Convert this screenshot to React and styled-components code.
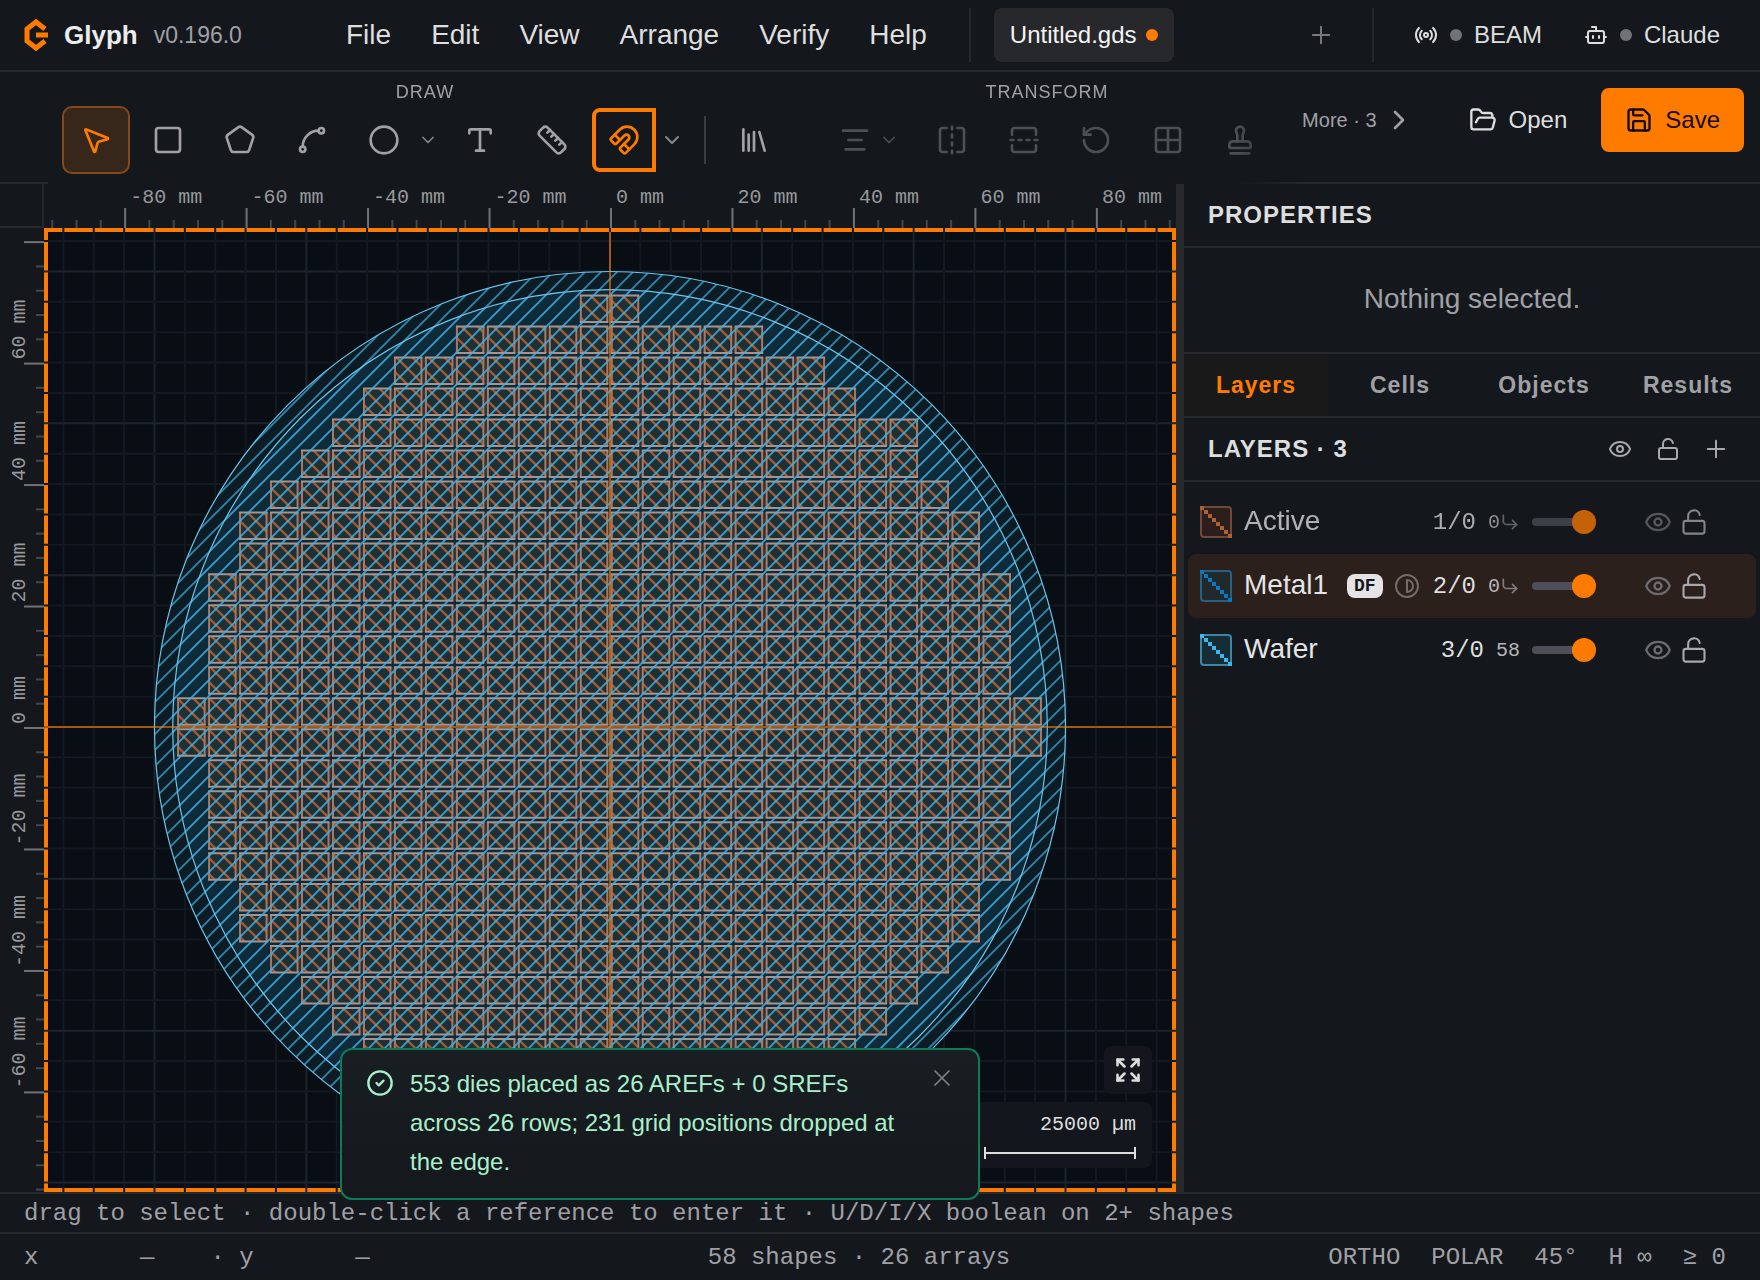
import React, { useState } from 'react'
import styled, { createGlobalStyle } from 'styled-components'
import {
   Bot, ChevronDown, ChevronRight, Circle, CircleCheck, CornerDownRight, Expand, Eye,
   FlipHorizontal, FlipVertical, FolderOpen, Grid2x2, Library, LockOpen, Magnet,
   MousePointer2, Pentagon, Plus, Radio, RotateCcw, Ruler, Save, Spline, Square, Stamp,
   AlignCenter, Type, X,
} from 'lucide-react'

const ORANGE = '#ff7b00'
const PANEL = '#14181c'
const LINE = '#25282c'
const MUTED = '#a0a0a6'
const BRIGHT = '#dededf'
const MONO = "'Liberation Mono', monospace"

const MENUS = ['File', 'Edit', 'View', 'Arrange', 'Verify', 'Help']
const TABS = ['Layers', 'Cells', 'Objects', 'Results']
const SNAPS = ['ORTHO', 'POLAR', '45°', 'H ∞', '≥ 0']

const LAYERS = [
   { name: 'Active', code: '1/0', count: '0', nested: true, color: '#e07a3c', fill: '#33201b', edge: '#8f5943', dim: true },
   { name: 'Metal1', code: '2/0', count: '0', nested: true, color: '#0d78bd', fill: '#20292b', edge: '#285f85', darkField: true },
   { name: 'Wafer', code: '3/0', count: '58', color: '#3db8ee', fill: '#182c35', edge: '#3a88a5' },
]

// canvas scale, px per mm
const MM = 6.0735
const DIE_PITCH = 5.1 * MM
const DIE_SIZE = 26.5
const DIE_LEFT = -29.2
const DIE_TOP = -431.4
// first and last die column of every row, top to bottom
const DIE_ROWS = [
   [0, 1], [-4, 5], [-6, 7], [-7, 8], [-8, 10], [-9, 10], [-10, 11], [-11, 12], [-11, 12],
   [-12, 13], [-12, 13], [-12, 13], [-12, 13], [-13, 14], [-13, 14],
   [-12, 13], [-12, 13], [-12, 13], [-12, 13], [-11, 12], [-11, 12],
   [-10, 11], [-9, 10], [-8, 9], [-7, 8], [-6, 7],
]

const range = (from, to) => Array.from({ length: to - from + 1 }, (_, i) => from + i)

const TopRuler = () => (
   <RulerSvg>
      <svg x="50%" overflow="visible">
         {range(-25, 25).map((i) => {
            const major = i % 5 === 0
            return (
               <rect key={i} x={i * 4 * MM} y={major ? 24 : 36} width="2" height={major ? 20 : 8} fill={major ? '#707277' : '#43464a'} />
            )
         })}
         {range(-4, 4).map((i) => (
            <text key={i} x={i * 20 * MM + 6} y="19">{i * 20} mm</text>
         ))}
      </svg>
   </RulerSvg>
)

const SideRuler = () => (
   <RulerSvg>
      <svg y="499" overflow="visible">
         {range(-25, 25).map((i) => {
            const major = i % 5 === 0
            return (
               <rect key={i} x={major ? 24 : 36} y={i * 4 * MM} width={major ? 20 : 8} height="2" fill={major ? '#707277' : '#43464a'} />
            )
         })}
         {range(-3, 3).map((i) => (
            <text key={i} transform={`translate(25 ${-i * 20 * MM - 3}) rotate(-90)`}>{i * 20} mm</text>
         ))}
      </svg>
   </RulerSvg>
)

const DieRow = ({ row, first, last }) => {
   const y = DIE_TOP + row * DIE_PITCH
   const x = (col) => DIE_LEFT + col * DIE_PITCH
   const cols = range(first, last)
   const edges = cols.map((col) => `M${x(col)} ${y}v${DIE_SIZE}m${DIE_SIZE} 0v${-DIE_SIZE}`).join('')
   const caps = cols.map((col) => `M${x(col) - 1} ${y}h${DIE_SIZE + 2}m0 ${DIE_SIZE}h${-DIE_SIZE - 2}`).join('')
   return (
      <g>
         <rect x={x(first)} y={y} width={x(last) - x(first) + DIE_SIZE} height={DIE_SIZE} fill="#2b3338" />
         {cols.map((col) => (
            <React.Fragment key={col}>
               <rect x={x(col)} y={y} width={DIE_SIZE} height={DIE_SIZE} fill="#202f33" />
               <rect x={x(col)} y={y} width={DIE_SIZE} height={DIE_SIZE} fill="url(#dieHatch)" opacity="0.75" />
            </React.Fragment>
         ))}
         <path d={edges} stroke="#a87862" strokeWidth="2" fill="none" />
         <path d={caps} stroke="#a8938c" strokeWidth="2" fill="none" />
      </g>
   )
}

const Wafer = () => (
   <CanvasSvg role="img" aria-label="Wafer layout">
      <defs>
         <pattern id="hatch" width="16" height="16" patternUnits="userSpaceOnUse">
            <path d="M-2 2L2 -2M-2 18L18 -2M14 18L18 14" stroke="#3db4ea" strokeWidth="1.8" />
         </pattern>
         <pattern id="dieHatch" width="16" height="16" patternUnits="userSpaceOnUse">
            <path d="M10 -2L18 6M-2 2L14 18" stroke="#c06a35" strokeWidth="2.4" />
         </pattern>
      </defs>
      <rect x="2" y="2" fill="none" stroke={ORANGE} strokeWidth="4" style={{ width: 'calc(100% - 4px)', height: 'calc(100% - 4px)' }} />
      <svg x="50%" y="499" overflow="visible">
         {range(-50, 50).map((i) => (
            <path
               key={i}
               d={`M${i * 5 * MM} -1600V1600M-1600 ${i * 5 * MM}H1600`}
               stroke={i % 5 === 0 ? '#1c242c' : '#131920'}
               strokeWidth="2"
            />
         ))}
         <circle r={75 * MM} fill="#0c1b24" />
         <circle r={75 * MM} fill="url(#hatch)" opacity="0.7" />
         <circle r={72 * MM} fill="#0f2a38" />
         {DIE_ROWS.map(([first, last], row) => (
            <DieRow key={row} row={row} first={first} last={last} />
         ))}
         <circle r={72 * MM} fill="url(#hatch)" opacity="0.85" />
         <circle r={75 * MM} fill="none" stroke="#6cc4ea" strokeWidth="1.2" />
         <circle r={72 * MM} fill="none" stroke="#6cc4ea" strokeWidth="1.2" />
         <path d="M0 -495V1600M-1600 0H1600" stroke={ORANGE} strokeWidth="2" opacity="0.6" />
      </svg>
   </CanvasSvg>
)

const Logo = () => (
   <svg width="24" height="34" viewBox="0 0 24 34" fill="none" stroke={ORANGE} strokeWidth="5" aria-hidden="true">
      <path d="M21 11L12 4L3 11V23L12 30L21 23M12 17H24" />
   </svg>
)

const Swatch = ({ layer }) => (
   <svg width="32" height="32" aria-hidden="true">
      <rect x="1" y="1" width="30" height="30" rx="3" fill={layer.fill} stroke={layer.edge} strokeWidth="2" />
      {range(0, 7).map((i) => (
         <rect key={i} x={i * 4} y={i * 4} width="4" height="4" fill={layer.color} />
      ))}
   </svg>
)

const Invert = () => (
   <svg width="24" height="24" viewBox="0 0 24 24" fill="none" stroke="#75696a" strokeWidth="2" aria-hidden="true">
      <circle cx="12" cy="12" r="11" />
      <path d="M12 6v12a6 6 0 0 0 0-12z" />
   </svg>
)

const LayerRow = ({ layer, selected }) => {
   const [opacity, setOpacity] = useState(100)
   return (
      <Row $selected={selected} $dim={layer.dim}>
         <Swatch layer={layer} />
         <LayerName>{layer.name}</LayerName>
         {layer.darkField && (
            <>
               <Badge>DF</Badge>
               <Invert />
            </>
         )}
         <LayerCode>{layer.code}</LayerCode>
         <LayerCount>
            {layer.count}
            {layer.nested && <CornerDownRight size={20} />}
         </LayerCount>
         <Slider
            type="range"
            aria-label={`${layer.name} opacity`}
            value={opacity}
            onChange={(e) => setOpacity(e.target.value)}
         />
         <RowActions>
            <IconButton $w={32} $color="#6c6c71" aria-label={`Hide ${layer.name}`}><Eye size={28} /></IconButton>
            <IconButton $w={32} aria-label={`Lock ${layer.name}`}><LockOpen size={28} strokeWidth={1.8} /></IconButton>
         </RowActions>
      </Row>
   )
}

const App = () => {
   const [tab, setTab] = useState('Layers')
   const [toast, setToast] = useState(true)
   return (
      <Page>
         <GlobalStyle />
         <Header>
            <Brand>
               <Logo />
               <AppName>Glyph</AppName>
               <Version>v0.196.0</Version>
            </Brand>
            <Menu>
               {MENUS.map((item) => <MenuButton key={item}>{item}</MenuButton>)}
            </Menu>
            <Divider />
            <FileTabs>
               <FileTab>
                  Untitled.gds
                  <Dot $color={ORANGE} />
               </FileTab>
               <IconButton $w={48} $color="#77797d" aria-label="New file"><Plus size={28} strokeWidth={1.7} /></IconButton>
            </FileTabs>
            <Divider />
            <Links>
               <LinkButton><Radio size={24} /><Dot $color="#707277" />BEAM</LinkButton>
               <LinkButton><Bot size={24} /><Dot $color="#707277" />Claude</LinkButton>
            </Links>
         </Header>

         <Toolbar>
            <ToolScroller>
               <ToolGroup>
                  <GroupLabel>DRAW</GroupLabel>
                  <Tools>
                     <Tool $active aria-label="Select"><MousePointer2 size={32} /></Tool>
                     <Tool aria-label="Rectangle"><Square size={32} /></Tool>
                     <Tool aria-label="Polygon"><Pentagon size={32} /></Tool>
                     <Tool aria-label="Path"><Spline size={32} /></Tool>
                     <Tool aria-label="Circle"><Circle size={32} /></Tool>
                     <MoreShapes aria-label="More shapes"><ChevronDown size={20} /></MoreShapes>
                     <Tool aria-label="Text"><Type size={32} /></Tool>
                     <Tool aria-label="Ruler"><Ruler size={32} /></Tool>
                     <SnapTool aria-label="Snap"><Magnet size={32} /></SnapTool>
                     <SnapMenu aria-label="Snap options"><ChevronDown size={24} /></SnapMenu>
                     <ToolDivider />
                     <Tool aria-label="Library"><Library size={32} /></Tool>
                  </Tools>
               </ToolGroup>
               <ToolGroup>
                  <GroupLabel>TRANSFORM</GroupLabel>
                  <Tools>
                     <AlignTool disabled aria-label="Align">
                        <AlignCenter size={32} />
                        <ChevronDown size={20} />
                     </AlignTool>
                     <Tool disabled aria-label="Flip horizontal"><FlipHorizontal size={32} /></Tool>
                     <Tool disabled aria-label="Flip vertical"><FlipVertical size={32} /></Tool>
                     <Tool disabled aria-label="Rotate"><RotateCcw size={32} /></Tool>
                     <Tool disabled aria-label="Array"><Grid2x2 size={32} /></Tool>
                     <Tool disabled aria-label="Stamp"><Stamp size={32} /></Tool>
                  </Tools>
               </ToolGroup>
            </ToolScroller>
            <ToolbarEnd>
               <MoreButton>More · 3<ChevronRight size={32} /></MoreButton>
               <OpenButton><FolderOpen size={28} />Open</OpenButton>
               <SaveButton><Save size={28} />Save</SaveButton>
            </ToolbarEnd>
         </Toolbar>

         <Body>
            <Workspace>
               <Corner />
               <TopRuler />
               <SideRuler />
               <Canvas>
                  <Wafer />
                  <FitButton aria-label="Zoom to fit"><Expand size={28} strokeWidth={2.2} /></FitButton>
                  <ScaleBar>
                     25000 µm
                     <svg width="152" height="14" fill="none" stroke="#dededf" strokeWidth="2" aria-hidden="true">
                        <path d="M1 1V13M1 7H151M151 1V13" />
                     </svg>
                  </ScaleBar>
                  {toast && (
                     <Toast role="status">
                        <CircleCheck size={28} />
                        <ToastText>
                           553 dies placed as 26 AREFs + 0 SREFs across 26 rows; 231 grid positions dropped at the edge.
                        </ToastText>
                        <ToastClose aria-label="Dismiss" onClick={() => setToast(false)}>
                           <X size={28} strokeWidth={1.5} />
                        </ToastClose>
                     </Toast>
                  )}
               </Canvas>
            </Workspace>
            <Splitter />
            <Sidebar>
               <PanelHeader>PROPERTIES</PanelHeader>
               <Empty>Nothing selected.</Empty>
               <TabBar role="tablist">
                  {TABS.map((name) => (
                     <Tab key={name} role="tab" aria-selected={name === tab} $active={name === tab} onClick={() => setTab(name)}>
                        {name}
                     </Tab>
                  ))}
               </TabBar>
               <PanelHeader>
                  LAYERS · 3
                  <PanelActions>
                     <IconButton $w={48} aria-label="Toggle all"><Eye size={24} /></IconButton>
                     <IconButton $w={48} aria-label="Lock all"><LockOpen size={24} /></IconButton>
                     <IconButton $w={48} aria-label="Add layer"><Plus size={28} strokeWidth={1.7} /></IconButton>
                  </PanelActions>
               </PanelHeader>
               <LayerList>
                  {LAYERS.map((layer) => (
                     <LayerRow key={layer.name} layer={layer} selected={layer.name === 'Metal1'} />
                  ))}
               </LayerList>
            </Sidebar>
         </Body>

         <HintBar>drag to select · double-click a reference to enter it · U/D/I/X boolean on 2+ shapes</HintBar>
         <StatusBar>
            <Coords>
               <Coord>x<CoordValue>—</CoordValue></Coord>
               <Coord>· y<CoordValue>—</CoordValue></Coord>
            </Coords>
            <span>58 shapes · 26 arrays</span>
            <Snaps>
               {SNAPS.map((item) => <button key={item}>{item}</button>)}
            </Snaps>
         </StatusBar>
      </Page>
   )
}

const GlobalStyle = createGlobalStyle`
   * {
      box-sizing: border-box;
   }
   body {
      margin: 0;
      background: ${PANEL};
      color: ${BRIGHT};
      font-family: 'Liberation Sans', Arial, sans-serif;
      font-size: 24px;
   }
   button {
      display: flex;
      align-items: center;
      justify-content: center;
      margin: 0;
      padding: 0;
      border: none;
      background: none;
      color: inherit;
      font: inherit;
      letter-spacing: inherit;
      white-space: nowrap;
      cursor: pointer;
   }
   svg {
      flex: none;
   }
`
const Page = styled.div`
   display: flex;
   flex-direction: column;
   min-height: 100vh;
`
const Header = styled.header`
   display: flex;
   align-items: center;
   height: 72px;
   border-bottom: 2px solid ${LINE};
`
const Brand = styled.div`
   display: flex;
   align-items: center;
   gap: 16px;
   width: 326px;
   padding-left: 24px;
`
const AppName = styled.span`
   color: #ececee;
   font-size: 26px;
   font-weight: bold;
`
const Version = styled.span`
   color: ${MUTED};
   font-size: 23px;
`
const Menu = styled.nav`
   display: flex;
   margin-right: 22px;
`
const MenuButton = styled.button`
   height: 54px;
   padding: 0 20px;
   font-size: 28px;
`
const Divider = styled.span`
   width: 2px;
   height: 54px;
   background: ${LINE};
`
const FileTabs = styled.div`
   display: flex;
   flex: 1;
   align-items: center;
   justify-content: space-between;
   padding: 0 27px 0 23px;
`
const FileTab = styled.button`
   gap: 9px;
   height: 54px;
   padding: 0 16px;
   border-radius: 8px;
   background: #27282b;
   color: #f4f4f5;
`
const Dot = styled.span`
   width: 12px;
   height: 12px;
   border-radius: 50%;
   background: ${({ $color }) => $color};
`
const Links = styled.div`
   display: flex;
   gap: 42px;
   padding: 0 40px;
`
const LinkButton = styled.button`
   gap: 12px;
`
const IconButton = styled.button`
   width: ${({ $w }) => $w}px;
   height: 48px;
   color: ${({ $color }) => $color || '#a8a8ad'};
`
const Toolbar = styled.div`
   display: flex;
   height: 112px;
   border-bottom: 2px solid ${LINE};
`
const ToolScroller = styled.div`
   display: flex;
   flex: 1;
   gap: 32px;
   min-width: 0;
   margin: 0 0 -2px 48px;
   padding: 10px 0 0 14px;
   overflow: hidden;
   background: ${PANEL};
   mask-image: linear-gradient(to right, black calc(100% - 64px), transparent);
`
const ToolGroup = styled.div`
   display: flex;
   flex: none;
   flex-direction: column;
   align-items: center;
   gap: 4px;
`
const GroupLabel = styled.span`
   color: ${MUTED};
   font-size: 18px;
   line-height: 20px;
   letter-spacing: 1px;
`
const Tools = styled.div`
   display: flex;
   align-items: center;
   gap: 4px;
`
const Tool = styled.button`
   width: 68px;
   height: 68px;
   border: 2px solid ${({ $active }) => ($active ? '#85481a' : 'transparent')};
   border-radius: 10px;
   background: ${({ $active }) => ($active ? '#37271b' : 'none')};
   color: ${({ $active }) => ($active ? ORANGE : MUTED)};
   &:disabled {
      color: #4c4f53;
   }
`
const MoreShapes = styled.button`
   width: 20px;
   height: 68px;
   margin: 0 4px 0 -4px;
   color: #85878b;
`
const SnapTool = styled.button`
   width: 64px;
   height: 64px;
   margin-left: 2px;
   border: 4px solid ${ORANGE};
   border-radius: 8px 0 0 8px;
   color: ${ORANGE};
`
const SnapMenu = styled.button`
   width: 24px;
   height: 64px;
   color: #85878b;
`
const ToolDivider = styled.span`
   width: 2px;
   height: 48px;
   margin: 0 10px 0 16px;
   background: #3a3c40;
`
const AlignTool = styled(Tool)`
   gap: 8px;
   width: 94px;
   padding-left: 4px;
`
const ToolbarEnd = styled.div`
   display: flex;
   align-items: center;
   height: 64px;
   margin: 16px 16px 0 0;
`
const MoreButton = styled.button`
   gap: 6px;
   margin-right: 54px;
   color: ${MUTED};
   font-size: 20px;
`
const OpenButton = styled.button`
   gap: 12px;
   margin-right: 34px;
`
const SaveButton = styled.button`
   gap: 12px;
   height: 64px;
   padding: 0 24px;
   border-radius: 8px;
   background: ${ORANGE};
   color: #130b04;
`
const Body = styled.main`
   display: flex;
   flex: 1;
`
const Workspace = styled.section`
   display: grid;
   flex: 1;
   grid-template: 44px 1fr / 44px 1fr;
   min-width: 0;
`
const Corner = styled.div`
   border-right: 2px solid ${LINE};
   border-bottom: 2px solid ${LINE};
`
const RulerSvg = styled.svg`
   width: 100%;
   height: 100%;
   text {
      fill: #97999d;
      font-family: ${MONO};
      font-size: 20px;
   }
`
const Canvas = styled.div`
   position: relative;
   min-height: 640px;
   background: #090d14;
`
const CanvasSvg = styled.svg`
   position: absolute;
   width: 100%;
   height: 100%;
`
const FitButton = styled.button`
   position: absolute;
   right: 24px;
   bottom: 98px;
   width: 48px;
   height: 48px;
   border-radius: 8px;
   background: #13171d;
`
const ScaleBar = styled.div`
   position: absolute;
   right: 24px;
   bottom: 24px;
   display: flex;
   flex-direction: column;
   align-items: flex-end;
   gap: 10px;
   padding: 12px 16px 8px;
   border-radius: 8px;
   background: #13171d;
   font-family: ${MONO};
   font-size: 20px;
   line-height: 22px;
`
const Toast = styled.div`
   position: absolute;
   z-index: 2;
   left: calc(50% - 270px);
   bottom: -8px;
   display: flex;
   align-items: flex-start;
   gap: 16px;
   width: 640px;
   padding: 14px 22px 17px 24px;
   border: 2px solid #0f7a57;
   border-radius: 12px;
   background: linear-gradient(#191e23, #14181c);
   color: #a9efcb;
   > svg {
      margin-top: 5px;
   }
`
const ToastText = styled.p`
   flex: 1;
   margin: 0;
   padding-right: 8px;
   line-height: 39px;
`
const ToastClose = styled.button`
   color: #7d8084;
`
const Splitter = styled.div`
   width: 8px;
   background: #27292c;
`
const Sidebar = styled.aside`
   width: 576px;
`
const PanelHeader = styled.h2`
   display: flex;
   align-items: center;
   justify-content: space-between;
   height: 64px;
   margin: 0;
   padding: 0 20px 0 24px;
   border-bottom: 2px solid ${LINE};
   font-size: 24px;
   letter-spacing: 1px;
`
const PanelActions = styled.div`
   display: flex;
`
const Empty = styled.p`
   margin: 0;
   padding: 34px 0 36px;
   border-bottom: 2px solid ${LINE};
   color: ${MUTED};
   font-size: 28px;
   line-height: 34px;
   text-align: center;
`
const TabBar = styled.div`
   display: grid;
   grid-template-columns: repeat(4, 1fr);
   height: 64px;
   border-bottom: 2px solid ${LINE};
`
const Tab = styled.button`
   background: ${({ $active }) => ($active ? '#19191a' : 'none')};
   color: ${({ $active }) => ($active ? ORANGE : MUTED)};
   font-size: 23px;
   font-weight: bold;
   letter-spacing: 1px;
`
const LayerList = styled.ul`
   margin: 0;
   padding: 8px 4px;
   list-style: none;
`
const Row = styled.li`
   display: flex;
   align-items: center;
   gap: 12px;
   height: 64px;
   padding: 0 46px 0 12px;
   border-radius: 8px;
   background: ${({ $selected }) => ($selected ? '#2b201b' : 'none')};
   > * {
      opacity: ${({ $dim }) => ($dim ? 0.75 : 1)};
   }
`
const LayerName = styled.span`
   flex: 1;
   padding-bottom: 2px;
   color: #e4e4e7;
   font-size: 28px;
`
const Badge = styled.span`
   width: 36px;
   border-radius: 8px;
   background: #e4e4e7;
   color: #14181c;
   font-family: ${MONO};
   font-size: 18px;
   font-weight: bold;
   line-height: 24px;
   text-align: center;
`
const LayerCode = styled.span`
   margin-left: 2px;
   font-family: ${MONO};
`
const LayerCount = styled.span`
   display: flex;
   align-items: center;
   color: #b4b4b8;
   font-family: ${MONO};
   font-size: 20px;
   svg {
      color: #7d7d82;
   }
`
const Slider = styled.input`
   width: 64px;
   height: 24px;
   margin: 0;
   appearance: none;
   background: none;
   &::-webkit-slider-runnable-track {
      height: 8px;
      border-radius: 4px;
      background: #4d4e57;
   }
   &::-webkit-slider-thumb {
      width: 24px;
      height: 24px;
      margin-top: -8px;
      border-radius: 50%;
      appearance: none;
      background: ${ORANGE};
   }
`
const RowActions = styled.div`
   display: flex;
   gap: 4px;
   margin-left: 34px;
`
const HintBar = styled.div`
   height: 40px;
   padding: 0 24px;
   border-top: 2px solid ${LINE};
   color: ${MUTED};
   font-family: ${MONO};
   line-height: 40px;
   white-space: nowrap;
`
const StatusBar = styled.footer`
   display: flex;
   align-items: center;
   justify-content: space-between;
   height: 48px;
   padding: 0 34px 0 24px;
   border-top: 2px solid ${LINE};
   color: ${MUTED};
   font-family: ${MONO};
   white-space: nowrap;
`
const Coords = styled.div`
   display: flex;
   gap: 56px;
   padding-right: 20px;
`
const Coord = styled.span`
   display: flex;
   gap: 8px;
`
const CoordValue = styled.span`
   width: 108px;
   text-align: right;
`
const Snaps = styled.div`
   display: flex;
   gap: 31px;
`

export default App
